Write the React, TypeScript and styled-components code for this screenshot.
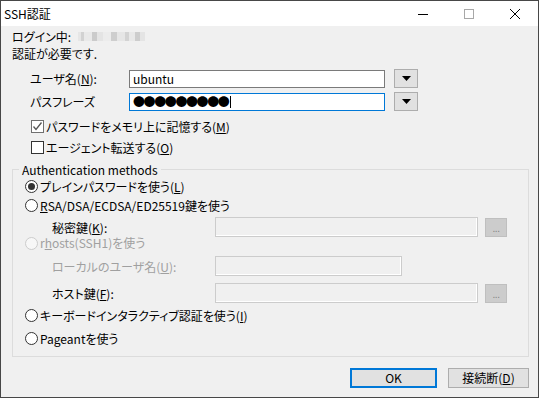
import React from "react";
import styled, { createGlobalStyle } from "styled-components";

const GlobalStyle = createGlobalStyle`
  html, body {
    margin: 0;
    padding: 0;
    background: #ffffff;
  }
  body {
    font-family: "Noto Sans CJK JP", "Noto Sans", sans-serif;
    font-size: 12px;
    color: #000000;
    font-feature-settings: "palt";
  }
  * {
    box-sizing: border-box;
  }
`;

const Window = styled.div`
  width: 539px;
  height: 398px;
  border: 1px solid #474747;
  background: #f0f0f0;
  display: flex;
  flex-direction: column;
`;

const TitleBar = styled.div`
  height: 25px;
  background: #ffffff;
  display: flex;
  align-items: center;
  flex-shrink: 0;
`;

const Title = styled.div`
  flex: 1;
  padding-left: 3px;
  line-height: 17px;
`;

const CaptionButton = styled.div`
  width: 46px;
  height: 25px;
  display: flex;
  align-items: center;
  justify-content: center;
`;

const Body = styled.div`
  padding: 2px 9px 0 11px;
  display: flex;
  flex-direction: column;
`;

const InfoLine = styled.div`
  height: 17px;
  line-height: 17px;
  display: flex;
  align-items: center;
  white-space: nowrap;
`;

const Mosaic = styled.span`
  display: inline-block;
  width: 67px;
  height: 9px;
  margin-left: 7px;
  background: linear-gradient(
    90deg,
    #e6e6e6 0 3px,
    #d2d2d2 3px 6px,
    #e9e9e9 6px 14px,
    #cbcbcb 14px 19px,
    #e4e4e4 19px 25px,
    #ececec 25px 33px,
    #cecece 33px 39px,
    #e6e6e6 39px 47px,
    #d3d3d3 47px 51px,
    #e8e8e8 51px 57px,
    #cdcdcd 57px 62px,
    #e4e4e4 62px 67px
  );
`;

const FieldRow = styled.div<{ $mt: number; $indent?: number; $h?: number }>`
  display: flex;
  align-items: center;
  height: ${p => p.$h ?? 19}px;
  margin-top: ${p => p.$mt}px;
  margin-left: ${p => p.$indent ?? 0}px;
  line-height: 17px;
  white-space: nowrap;
`;

const FieldLabel = styled.span<{ $w: number; $disabled?: boolean }>`
  width: ${p => p.$w}px;
  flex-shrink: 0;
  color: ${p => (p.$disabled ? "#a0a0a0" : "#000000")};
`;

const TextBox = styled.div<{ $focused?: boolean }>`
  width: 256px;
  height: 18px;
  background: #ffffff;
  border: 1px solid ${p => (p.$focused ? "#0078d7" : "#7a7a7a")};
  padding-left: 3px;
  display: flex;
  align-items: center;
  line-height: 16px;
`;

const Mask = styled.span`
  font-size: 12px;
  letter-spacing: -1.4px;
  line-height: 16px;
`;

const Caret = styled.span`
  display: inline-block;
  width: 1px;
  height: 12px;
  background: #000000;
  margin-left: 2px;
`;

const DropButton = styled.div`
  width: 24px;
  height: 19px;
  margin-left: 9px;
  background: #e1e1e1;
  border: 1px solid #adadad;
  display: flex;
  align-items: center;
  justify-content: center;
`;

const CheckRow = styled.label<{ $mt: number }>`
  display: flex;
  align-items: center;
  height: 18px;
  margin-top: ${p => p.$mt}px;
  margin-left: 19px;
  line-height: 17px;
  white-space: nowrap;
`;

const CheckBox = styled.span<{ $checked?: boolean }>`
  width: 13px;
  height: 13px;
  margin-right: 2px;
  background: #ffffff;
  border: 1px solid ${p => (p.$checked ? "#707070" : "#333333")};
  display: flex;
  align-items: center;
  justify-content: center;
  flex-shrink: 0;
`;

const Group = styled.fieldset`
  margin: 5px 0 0 0;
  padding: 0 0 9px 0;
  border: 1px solid #dcdcdc;
  min-inline-size: 0;
`;

const Legend = styled.legend`
  margin-left: 6px;
  padding: 0 3px;
  line-height: 17px;
`;

const RadioRow = styled.div<{ $mt: number; $h: number; $disabled?: boolean }>`
  display: flex;
  align-items: center;
  height: ${p => p.$h}px;
  margin-top: ${p => p.$mt}px;
  margin-left: 12px;
  line-height: ${p => Math.min(p.$h, 17)}px;
  white-space: nowrap;
  color: ${p => (p.$disabled ? "#a0a0a0" : "#000000")};
`;

const Radio = styled.span<{ $checked?: boolean; $disabled?: boolean }>`
  width: 13px;
  height: 13px;
  border-radius: 50%;
  margin-right: 2px;
  flex-shrink: 0;
  background: ${p => (p.$disabled ? "#f7f7f7" : "#ffffff")};
  border: 1px solid ${p => (p.$disabled ? "#cccccc" : "#333333")};
  display: flex;
  align-items: center;
  justify-content: center;

  &::after {
    content: "";
    display: ${p => (p.$checked ? "block" : "none")};
    width: 7px;
    height: 7px;
    border-radius: 50%;
    background: #333333;
  }
`;

const DisabledBox = styled.div<{ $w: number }>`
  width: ${p => p.$w}px;
  height: 20px;
  background: #f0f0f0;
  border: 1px solid #cccccc;
  box-shadow: inset -1px -1px 0 #ffffff;
  flex-shrink: 0;
`;

const EllipsisButton = styled.div`
  width: 22px;
  height: 19px;
  margin-left: 7px;
  background: #cccccc;
  border: 1px solid #bfbfbf;
  color: #838383;
  font-size: 10px;
  line-height: 19px;
  text-align: center;
  letter-spacing: -0.5px;
  font-family: "Liberation Sans", sans-serif;
`;

const ButtonBar = styled.div`
  display: flex;
  justify-content: flex-end;
  gap: 11px;
  margin-top: 11px;
`;

const DialogButton = styled.div<{ $default?: boolean; $w: number }>`
  width: ${p => p.$w}px;
  height: 20px;
  background: #e1e1e1;
  border: ${p => (p.$default ? "2px solid #0078d7" : "1px solid #adadad")};
  display: flex;
  align-items: center;
  justify-content: center;
  line-height: 16px;
`;

const DropArrow = () => (
  <svg width="9" height="5" viewBox="0 0 9 5">
    <polygon points="0,0 9,0 4.5,5" fill="#000" />
  </svg>
);

export default function App() {
  return (
    <>
      <GlobalStyle />
      <Window>
        <TitleBar>
          <Title>SSH認証</Title>
          <CaptionButton>
            <svg width="10" height="10" viewBox="0 0 10 10">
              <line x1="0" y1="5.5" x2="10" y2="5.5" stroke="#000" strokeWidth="1" />
            </svg>
          </CaptionButton>
          <CaptionButton>
            <svg width="10" height="10" viewBox="0 0 10 10">
              <rect x="0.5" y="0.5" width="9" height="9" fill="none" stroke="#a8a8a8" strokeWidth="1" />
            </svg>
          </CaptionButton>
          <CaptionButton>
            <svg width="10" height="10" viewBox="0 0 10 10">
              <path d="M0,0 L10,10 M10,0 L0,10" stroke="#000" strokeWidth="1" />
            </svg>
          </CaptionButton>
        </TitleBar>
        <Body>
          <InfoLine>
            ログイン中:<Mosaic />
          </InfoLine>
          <InfoLine>認証が必要です.</InfoLine>

          <FieldRow $mt={7} $indent={18}>
            <FieldLabel $w={99}>
              ユーザ名(<u>N</u>):
            </FieldLabel>
            <TextBox>ubuntu</TextBox>
            <DropButton>
              <DropArrow />
            </DropButton>
          </FieldRow>
          <FieldRow $mt={4} $indent={18}>
            <FieldLabel $w={99}>パスフレーズ</FieldLabel>
            <TextBox $focused>
              <Mask>●●●●●●●●●</Mask>
              <Caret />
            </TextBox>
            <DropButton>
              <DropArrow />
            </DropButton>
          </FieldRow>

          <CheckRow $mt={6}>
            <CheckBox $checked>
              <svg width="11" height="11" viewBox="0 0 11 11">
                <path d="M1.5,5.5 L4,8.5 L9.5,1.5" fill="none" stroke="#555" strokeWidth="1.3" />
              </svg>
            </CheckBox>
            パスワードをメモリ上に記憶する(<u>M</u>)
          </CheckRow>
          <CheckRow $mt={3}>
            <CheckBox />
            エージェント転送する(<u>O</u>)
          </CheckRow>

          <Group>
            <Legend>Authentication methods</Legend>
            <RadioRow $mt={0} $h={17}>
              <Radio $checked />
              プレインパスワードを使う(<u>L</u>)
            </RadioRow>
            <RadioRow $mt={1} $h={18}>
              <Radio />
              <u>R</u>SA/DSA/ECDSA/ED25519鍵を使う
            </RadioRow>
            <FieldRow $mt={3} $indent={39} $h={20}>
              <FieldLabel $w={163}>
                秘密鍵(<u>K</u>):
              </FieldLabel>
              <DisabledBox $w={263} />
              <EllipsisButton>...</EllipsisButton>
            </FieldRow>
            <RadioRow $mt={0} $h={12} $disabled>
              <Radio $disabled />
              r<u>h</u>osts(SSH1)を使う
            </RadioRow>
            <FieldRow $mt={7} $indent={39} $h={20}>
              <FieldLabel $w={163} $disabled>
                ローカルのユーザ名(<u>U</u>):
              </FieldLabel>
              <DisabledBox $w={187} />
            </FieldRow>
            <FieldRow $mt={7} $indent={39} $h={20}>
              <FieldLabel $w={163}>
                ホスト鍵(<u>F</u>):
              </FieldLabel>
              <DisabledBox $w={263} />
              <EllipsisButton>...</EllipsisButton>
            </FieldRow>
            <RadioRow $mt={3} $h={18}>
              <Radio />
              キーボードインタラクティブ認証を使う(<u>I</u>)
            </RadioRow>
            <RadioRow $mt={5} $h={18}>
              <Radio />
              Pageantを使う
            </RadioRow>
          </Group>

          <ButtonBar>
            <DialogButton $default $w={87}>
              OK
            </DialogButton>
            <DialogButton $w={81}>
              接続断(<u>D</u>)
            </DialogButton>
          </ButtonBar>
        </Body>
      </Window>
    </>
  );
}
